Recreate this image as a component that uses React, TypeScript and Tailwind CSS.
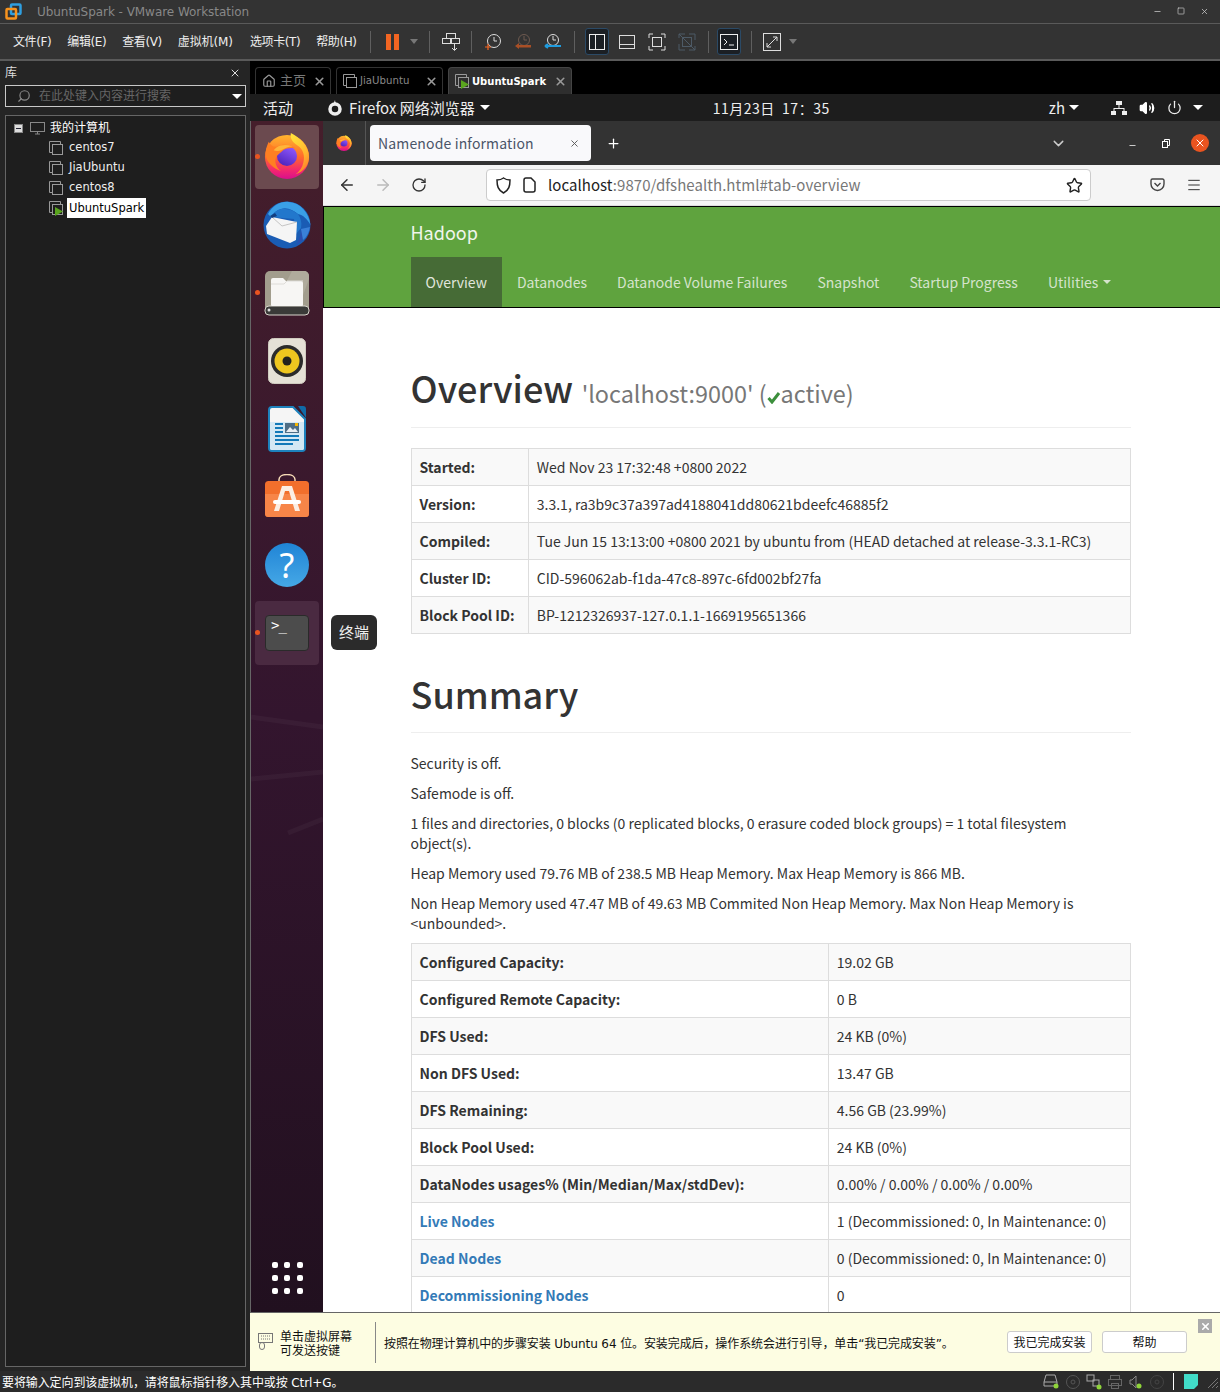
import { Minus, Square, X, Search, Plus, ChevronDown, ArrowLeft, ArrowRight, RotateCw, Star, Menu, Home, Volume2, Power } from "lucide-react"

const menus = ["文件(F)", "编辑(E)", "查看(V)", "虚拟机(M)", "选项卡(T)", "帮助(H)"]
const navItems = ["Datanodes", "Datanode Volume Failures", "Snapshot", "Startup Progress"]

const overviewRows = [
  ["Started:", "Wed Nov 23 17:32:48 +0800 2022"],
  ["Version:", "3.3.1, ra3b9c37a397ad4188041dd80621bdeefc46885f2"],
  ["Compiled:", "Tue Jun 15 13:13:00 +0800 2021 by ubuntu from (HEAD detached at release-3.3.1-RC3)"],
  ["Cluster ID:", "CID-596062ab-f1da-47c8-897c-6fd002bf27fa"],
  ["Block Pool ID:", "BP-1212326937-127.0.1.1-1669195651366"],
]

const summaryRows = [
  ["Configured Capacity:", "19.02 GB"],
  ["Configured Remote Capacity:", "0 B"],
  ["DFS Used:", "24 KB (0%)"],
  ["Non DFS Used:", "13.47 GB"],
  ["DFS Remaining:", "4.56 GB (23.99%)"],
  ["Block Pool Used:", "24 KB (0%)"],
  ["DataNodes usages% (Min/Median/Max/stdDev):", "0.00% / 0.00% / 0.00% / 0.00%"],
  ["Live Nodes", "1 (Decommissioned: 0, In Maintenance: 0)"],
  ["Dead Nodes", "0 (Decommissioned: 0, In Maintenance: 0)"],
  ["Decommissioning Nodes", "0"],
]

function VmStack({ run }: { run?: boolean }) {
  return (
    <svg width="16" height="16" viewBox="0 0 16 16" fill="none" stroke="#999" className="shrink-0">
      <path d="M4.500 12.500H1.500V1.500H12.500V4.500" />
      <rect x="4.500" y="4.500" width="10" height="10" />
      {run && <path d="M7 7l8 4.500-8 4.500z" fill="#5aa51e" stroke="none" />}
    </svg>
  )
}

function VmwareLogo() {
  return (
    <svg width="17" height="17" viewBox="0 0 17 17" fill="none" strokeWidth="2.500">
      <rect x="6" y="1.500" width="9.500" height="9.500" rx="1" stroke="#2f9fe0" />
      <rect x="1.500" y="6" width="9.500" height="9.500" rx="1" stroke="#f7931e" />
    </svg>
  )
}

function FirefoxLogo({ size }: { size: number }) {
  return (
    <svg width={size} height={size} viewBox="0 0 48 48">
      <defs>
        <linearGradient id={`ffa${size}`} x1="0.5" y1="0" x2="0.5" y2="1">
          <stop offset="0" stopColor="#ffb52e" />
          <stop offset="0.5" stopColor="#ff6a2a" />
          <stop offset="0.8" stopColor="#f3276f" />
          <stop offset="1" stopColor="#d80f8c" />
        </linearGradient>
        <linearGradient id={`ffb${size}`} x1="0.7" y1="0" x2="0.2" y2="1">
          <stop offset="0" stopColor="#9059ff" />
          <stop offset="1" stopColor="#4b21b8" />
        </linearGradient>
        <linearGradient id={`ffc${size}`} x1="0.3" y1="0" x2="0.7" y2="1">
          <stop offset="0" stopColor="#ffe03a" />
          <stop offset="0.6" stopColor="#ffb52e" />
          <stop offset="1" stopColor="#ff7a2a" />
        </linearGradient>
      </defs>
      <circle cx="24" cy="25" r="23" fill={`url(#ffa${size})`} />
      <circle cx="24" cy="24" r="10.500" fill={`url(#ffb${size})`} />
      <path d="M5 9c2 4 5 6 9 5 6-3 13-2 19 2-5-1-10 0-13 2-3 3-7 5-8 9-1 5 2 10 6 13C10 37 3 31 2 24 1 19 3 13 5 9z" fill="#ff7f22" />
      <path d="M13 15c5-3 11-3 17-1-5 0-9 2-12 4-2 1-6 1-8 0z" fill="#ffb53a" />
      <path d="M28 0c-1 6 2 10 7 13 6 4 8 11 6 18-1 5-4 9-8 12 9-3 14-10 14-18C47 14 38 5 28 0z" fill={`url(#ffc${size})`} />
    </svg>
  )
}

function ThunderbirdLogo() {
  return (
    <svg width="48" height="48" viewBox="0 0 48 48">
      <circle cx="24" cy="24" r="23.500" fill="#1a5cb4" />
      <path d="M5 13C10 4 18 0 26 1c12 1 20 11 21.500 23-3-6-7.500-10-12.500-11-5-4-11-7-17-5-4 1-8 4-10 8z" fill="#3a9fe6" />
      <path d="M8 16c3-5 8-9 14-8 6 0 10 3 13 5 3 4 4 9 3 14l-5 6-2-15z" fill="#2277cc" />
      <path d="M33 44c5-3 9-7 11-13l-6-3c0 6-2 11-5 16z" fill="#2a4fb0" />
      <path d="M38 28l9-2c-1 5-3 10-7 13z" fill="#3a80d8" />
      <path d="M3 25l6-9 25 5-1 18-6 3-23-9z" fill="#f5f5f5" />
      <path d="M9 16l10 9 15-4" fill="none" stroke="#b8b8b8" strokeWidth="0.800" />
      <path d="M7 15l5-3 2 3-5 2z" fill="#123f80" />
    </svg>
  )
}

function FilesIcon() {
  return (
    <svg width="46" height="46" viewBox="0 0 46 46">
      <rect x="1" y="1" width="44" height="44" rx="5" fill="#a29d8d" />
      <path d="M28 1h12a5 5 0 0 1 5 5v3L35 36H10z" fill="#b0ab9c" />
      <rect x="1" y="36" width="44" height="9" rx="4" fill="#3a3a38" stroke="#d8d5cc" />
      <circle cx="5" cy="40" r="1.500" fill="#ddd" />
      <path d="M7 10a2 2 0 0 1 2-2h10l3 3h15a2 2 0 0 1 2 2v22a1 1 0 0 1-1 1H8a1 1 0 0 1-1-1z" fill="#f7f6f4" />
      <path d="M7 14h13l3-3h16" stroke="#dedcd8" fill="none" />
    </svg>
  )
}

function RhythmboxIcon() {
  return (
    <svg width="38" height="46" viewBox="0 0 38 46">
      <rect x="0.500" y="0.500" width="37" height="45" rx="5" fill="#e5e1d6" stroke="#cfcbbf" />
      <circle cx="19" cy="23" r="16" fill="#2b2b2b" />
      <circle cx="19" cy="23" r="12.500" fill="#eec61f" />
      <circle cx="19" cy="23" r="4.500" fill="#22221e" />
    </svg>
  )
}

function WriterIcon() {
  return (
    <svg width="38" height="46" viewBox="0 0 38 46">
      <path d="M30 0h5a3 3 0 0 1 3 3v9z" fill="#106ba8" />
      <path d="M4 1h21l12 12v29a3 3 0 0 1-3 3H4a3 3 0 0 1-3-3V4a3 3 0 0 1 3-3z" fill="#f5f5f5" stroke="#1d82bd" strokeWidth="2" />
      <path d="M2 16h34v26a2 2 0 0 1-2 2H4a2 2 0 0 1-2-2z" fill="#d3e8f4" />
      <path d="M7 17h8v2H7zM7 21h8v2H7zM7 25h8v2H7zM7 29h24v2H7zM7 33h24v2H7zM7 37h18v2H7z" fill="#1279b8" />
      <rect x="17" y="17" width="14" height="10" fill="#4d6d85" />
      <path d="M18 26l4-5 3 3 2-2 3 4z" fill="#e8eef2" />
      <rect x="27" y="17" width="3" height="3" fill="#f4b400" />
    </svg>
  )
}

function AppStoreIcon() {
  return (
    <svg width="46" height="44" viewBox="0 0 46 44" className="-mt-[3px]">
      <path d="M15 8V5.500c0-3 3.500-5 8-5s8 2 8 5V8" fill="none" stroke="#f5d9b5" strokeWidth="1.500" />
      <rect x="1" y="7" width="44" height="36" rx="3.500" fill="#f26f2c" />
      <path d="M1 20h44v19.500a3.500 3.500 0 0 1-3.500 3.500h-37A3.500 3.500 0 0 1 1 39.500z" fill="#f78548" />
      <path d="M18 12h10l8 25h-5l-6-20h-4l-6 20h-5z" fill="#fbeee4" />
      <rect x="9" y="26" width="28" height="4" rx="2" fill="#fff" />
    </svg>
  )
}

function HelpIcon() {
  return (
    <div className="w-[44px] h-[44px] rounded-full bg-gradient-to-b from-[#1f84d6] to-[#45a8e6] flex items-center justify-center text-white text-[34px] leading-none font-['Noto_Sans',sans-serif]">
      ?
    </div>
  )
}

function TerminalIcon() {
  return (
    <div className="w-[44px] h-[36px] rounded-[4px] bg-[#4c4c4c] border border-[#2a2a2a] text-white text-[14px] leading-none pl-[5px] pt-[2px] font-['DejaVu_Sans_Mono',monospace] tracking-[-1px]">
      &gt;_
    </div>
  )
}

function DockItem({ active, running, children }: { active?: "strong" | "soft"; running?: boolean; children: React.ReactNode }) {
  return (
    <div
      className={`relative z-10 w-[64px] h-[64px] rounded-[4px] flex items-center justify-center ${
        active === "strong" ? "bg-[#6b4a4f]" : active === "soft" ? "bg-[#4a2a41]" : ""
      }`}
    >
      {running && <span className="absolute left-0 top-[29px] w-[5px] h-[5px] rounded-full bg-[#e95420]" />}
      {children}
    </div>
  )
}

function Sep() {
  return <div className="w-px h-[22px] bg-[#5f5f5f]" />
}

function Caret() {
  return <div className="w-0 h-0 border-l-[4px] border-r-[4px] border-t-[5px] border-l-transparent border-r-transparent border-t-[#777]" />
}

function WhiteCaret() {
  return <div className="w-0 h-0 border-l-[5px] border-r-[5px] border-t-[5px] border-l-transparent border-r-transparent border-t-white" />
}

function Toolbar() {
  return (
    <div className="h-[37px] shrink-0 flex items-center border-b-2 border-[#5a5a5a] bg-[#333] text-[#eee] text-[12px] pl-[13px]">
      <div className="flex gap-[16px] w-[357px]">
        {menus.map((m, i) => (
          <span key={m} className={`whitespace-nowrap ${i === 3 ? "tracking-[-0.1px] mr-[1px]" : "tracking-[-0.4px]"}`}>{m}</span>
        ))}
      </div>
      <div className="flex items-center">
        <Sep />
        <div className="ml-[15px] flex gap-[3px]">
          <span className="w-[5px] h-[16px] bg-[#f26522]" />
          <span className="w-[5px] h-[16px] bg-[#f26522]" />
        </div>
        <div className="ml-[11px] mr-[11px]"><Caret /></div>
        <Sep />
        <svg className="ml-[12px] mr-[11px]" width="18" height="20" viewBox="0 0 18 20" fill="none" stroke="#ddd">
          <rect x="4.500" y="1.500" width="9" height="5" />
          <rect x="0.500" y="6.500" width="9" height="5" />
          <rect x="8.500" y="6.500" width="9" height="5" />
          <path d="M12.500 12v6M10 16l2.500 2.500L15 16" />
        </svg>
        <Sep />
        <svg className="ml-[12px]" width="18" height="18" viewBox="0 0 18 18" fill="none">
          <circle cx="10" cy="8" r="6.500" stroke="#ddd" />
          <path d="M10 4v4h3" stroke="#ddd" />
          <path d="M1 14h6M4 11v6" stroke="#f26522" strokeWidth="1.200" />
        </svg>
        <svg className="ml-[12px]" width="18" height="18" viewBox="0 0 18 18" fill="none">
          <circle cx="10" cy="7" r="5.500" stroke="#6e5a50" />
          <path d="M10 3v4h3" stroke="#6e5a50" />
          <path d="M1 13l4-3v2h12v2.500H5V16z" fill="#a84f26" />
        </svg>
        <svg className="ml-[12px]" width="18" height="18" viewBox="0 0 18 18" fill="none">
          <circle cx="9" cy="7" r="5.500" stroke="#ddd" />
          <path d="M9 3v4h3" stroke="#ddd" />
          <path d="M1 13h16M1 13l3-2M1 13l3 2" stroke="#1f9bde" strokeWidth="2" />
        </svg>
        <div className="ml-[12px]"><Sep /></div>
        <div className="ml-[10px] w-[24px] h-[27px] rounded-[3px] bg-[#1b1f24] border border-[#2b4a66] flex items-center justify-center">
          <svg width="16" height="16" viewBox="0 0 16 16" fill="none" stroke="#eee"><rect x="0.500" y="0.500" width="15" height="15" /><path d="M6.500 1v14" /></svg>
        </div>
        <svg className="ml-[10px]" width="16" height="14" viewBox="0 0 16 14" fill="none" stroke="#ddd"><rect x="0.500" y="0.500" width="15" height="13" /><path d="M1 9.500h14" /></svg>
        <svg className="ml-[13px]" width="18" height="18" viewBox="0 0 18 18" fill="none" stroke="#ddd"><path d="M1 5V1h4M13 1h4v4M17 13v4h-4M5 17H1v-4" /><rect x="4.500" y="4.500" width="9" height="9" /></svg>
        <svg className="ml-[12px]" width="18" height="18" viewBox="0 0 18 18" fill="none" stroke="#4d5a66"><path d="M1 5V1h6M11 1h6v6M17 13v4h-6M7 17H1v-6" /><rect x="4.500" y="4.500" width="9" height="9" /><path d="M1 1l16 16" /></svg>
        <div className="ml-[12px]"><Sep /></div>
        <div className="ml-[8px] w-[24px] h-[27px] rounded-[3px] bg-[#1b1f24] border border-[#2b4a66] flex items-center justify-center">
          <svg width="18" height="16" viewBox="0 0 18 16" fill="none" stroke="#eee"><rect x="0.500" y="0.500" width="17" height="15" /><path d="M4 5l3 3-3 3M9 11h5" /></svg>
        </div>
        <div className="ml-[10px]"><Sep /></div>
        <svg className="ml-[11px]" width="18" height="18" viewBox="0 0 18 18" fill="none" stroke="#ddd"><rect x="0.500" y="0.500" width="17" height="17" /><path d="M4 14L14 4M10 4h4v4M4 10v4h4" /></svg>
        <div className="ml-[8px]"><Caret /></div>
      </div>
    </div>
  )
}

function LibraryPanel() {
  return (
    <aside className="w-[250px] shrink-0 flex flex-col px-[5px] pb-[4px] bg-[#252525] text-[12px]">
      <div className="h-[24px] shrink-0 flex items-center justify-between text-[#ddd] pr-[4px]">
        <span>库</span>
        <X size={12} strokeWidth={2} />
      </div>
      <div className="h-[22px] w-[241px] shrink-0 flex items-center border border-[#c8c8c8] bg-[#1e1e1e] pl-[11px] pr-[3px] text-[#666]">
        <Search size={14} className="text-[#888] -scale-x-100" />
        <span className="ml-[8px] flex-1">在此处键入内容进行搜索</span>
        <WhiteCaret />
      </div>
      <div className="mt-[8px] flex-1 w-[241px] border border-[#666] bg-[#1e1e1e] text-white pt-[2px] pl-[8px]">
        <div className="h-[20px] flex items-center">
          <span className="w-[9px] h-[9px] bg-[#dcdcdc] border border-[#888] flex items-center justify-center"><span className="w-[5px] h-px bg-[#223]" /></span>
          <svg className="ml-[7px]" width="15" height="13" viewBox="0 0 15 13" fill="none" stroke="#888"><rect x="0.500" y="0.500" width="14" height="9" /><path d="M5 12h5M7.500 10v2" /></svg>
          <span className="ml-[5px]">我的计算机</span>
        </div>
        {["centos7", "JiaUbuntu", "centos8"].map((n) => (
          <div key={n} className="h-[20px] flex items-center pl-[34px]">
            <VmStack />
            <span className="ml-[5px] text-[#eee] text-[11.500px]">{n}</span>
          </div>
        ))}
        <div className="h-[20px] flex items-center pl-[34px]">
          <VmStack run />
          <span className="ml-[3px] px-[2px] bg-white text-black h-[20px] leading-[20px] text-[11.500px]">UbuntuSpark</span>
        </div>
      </div>
    </aside>
  )
}

function VmTabs() {
  return (
    <div className="h-[33px] shrink-0 bg-black flex items-end pl-[5px] gap-[5px] text-[10.200px]">
      <div className="w-[76px] h-[27px] rounded-t-[4px] border border-b-0 border-[#333] flex items-center pl-[6px] pr-[4px] text-[#777] text-[13px]">
        <Home size={14} className="text-[#999]" />
        <span className="ml-[4px] flex-1">主页</span>
        <X size={13} strokeWidth={3} className="text-[#999]" />
      </div>
      <div className="w-[107px] h-[27px] rounded-t-[4px] border border-b-0 border-[#333] flex items-center pl-[5px] pr-[4px] text-[#888]">
        <VmStack />
        <span className="ml-[2px] flex-1">JiaUbuntu</span>
        <X size={13} strokeWidth={3} className="text-[#999]" />
      </div>
      <div className="w-[124px] h-[27px] rounded-t-[4px] border border-b-0 border-[#444] bg-[#2e2e2e] flex items-center pl-[5px] pr-[4px] text-white font-bold text-[10px]">
        <VmStack run />
        <span className="ml-[2px] flex-1">UbuntuSpark</span>
        <X size={13} strokeWidth={3} className="text-[#999]" />
      </div>
    </div>
  )
}

function GnomeBar() {
  return (
    <div className="h-[27px] shrink-0 bg-[#1d1d1d] text-[#eee] text-[15px] flex items-center pl-[13px] pr-[17px] font-['Noto_Sans_CJK_SC',sans-serif]">
      <span className="mt-[1px]">活动</span>
      <svg className="ml-[34px]" width="16" height="16" viewBox="0 0 16 16" fill="none" stroke="#eee">
        <circle cx="8" cy="9" r="5" strokeWidth="3.500" />
        <path d="M8 0c0 3 2 4 4 4l-6 1z" fill="#eee" stroke="none" />
      </svg>
      <span className="ml-[6px] mt-[1px]">Firefox 网络浏览器</span>
      <span className="ml-[5px]"><WhiteCaret /></span>
      <span className="ml-[223px] mt-[1px] tracking-[0.5px] text-[14px] whitespace-pre">11月23日  17：35</span>
      <span className="ml-auto mt-[1px]">zh</span>
      <span className="ml-[4px]"><WhiteCaret /></span>
      <svg className="ml-[32px]" width="16" height="14" viewBox="0 0 16 14" fill="#eee">
        <rect x="5" y="0" width="6" height="4" />
        <rect x="0" y="10" width="5" height="4" />
        <rect x="11" y="10" width="5" height="4" />
        <path d="M7.500 4h1v3h5v3h-1V8h-9v2h-1V7h5z" />
      </svg>
      <Volume2 size={16} className="ml-[12px] fill-white text-white" />
      <Power size={15} className="ml-[12px]" />
      <span className="ml-[11px]"><WhiteCaret /></span>
    </div>
  )
}

function Dock() {
  return (
    <div className="w-[73px] shrink-0 border-l border-[#666] bg-gradient-to-b from-[#451e2b] via-[#33152e] to-[#21101f] pl-[4px] pt-[4px] pb-[18px] flex flex-col gap-[4px] relative">
      <svg className="absolute left-0 top-[550px]" width="72" height="180" viewBox="0 0 72 180" fill="none" stroke="#ffffff" strokeOpacity="0.035" strokeWidth="5">
        <path d="M0 46l72 10M0 108l72-7" />
        <path d="M37 162l35-14" />
      </svg>
      <DockItem active="strong" running><div className="-mt-[3px]"><FirefoxLogo size={46} /></div></DockItem>
      <DockItem><ThunderbirdLogo /></DockItem>
      <DockItem running><FilesIcon /></DockItem>
      <DockItem><RhythmboxIcon /></DockItem>
      <DockItem><WriterIcon /></DockItem>
      <DockItem><AppStoreIcon /></DockItem>
      <DockItem><HelpIcon /></DockItem>
      <DockItem active="soft" running><TerminalIcon /></DockItem>
      <div className="mt-auto ml-[17px] w-[30px] grid grid-cols-3 gap-[7px]">
        {[0, 1, 2, 3, 4, 5, 6, 7, 8].map((i) => (
          <span key={i} className="w-[6px] h-[6px] rounded-[2px] bg-white" />
        ))}
      </div>
      <div className="absolute left-[80px] top-[494px] w-[46px] h-[35px] rounded-[6px] bg-[#2b2b2b] text-[#eee] text-[15px] flex items-center justify-center font-['Noto_Sans_CJK_SC',sans-serif] z-10">
        终端
      </div>
    </div>
  )
}

function BrowserChrome() {
  return (
    <>
      <div className="h-[44px] shrink-0 bg-[#333] flex items-center text-white">
        <div className="w-[43px] h-full border-r border-[#555] flex items-center justify-center">
          <FirefoxLogo size={16} />
        </div>
        <div className="ml-[4px] w-[221px] h-[36px] rounded-[4px] bg-[#f9f9fb] flex items-center pl-[8px] pr-[11px] text-[#4a5568] text-[14px]">
          <span className="flex-1 tracking-[0.15px]">Namenode information</span>
          <X size={11} className="text-[#555]" />
        </div>
        <Plus size={15} className="ml-[15px]" />
        <ChevronDown size={17} className="ml-[429px] text-[#ccc]" />
        <Minus size={9} className="ml-[61px] mt-[4px]" />
        <svg className="ml-[25px]" width="8" height="9" viewBox="0 0 8 9" fill="none" stroke="#fff"><rect x="0.500" y="2.500" width="5" height="6" /><path d="M2.500 2V.5h5v6H6" /></svg>
        <div className="ml-[21px] w-[18px] h-[18px] rounded-full bg-[#e95420] flex items-center justify-center">
          <X size={12} strokeWidth={2} />
        </div>
      </div>
      <div className="h-[41px] shrink-0 bg-[#f5f5f5] flex items-center pl-[15px] text-[#333] border-b border-[#ddd]">
        <ArrowLeft size={18} />
        <ArrowRight size={18} className="ml-[18px] text-[#bbb]" />
        <RotateCw size={16} className="ml-[19px]" />
        <div className="ml-[59px] w-[605px] h-[32px] rounded-[4px] bg-white border border-[#ccc] flex items-center pl-[9px] pr-[7px] text-[15px]">
          <svg width="15" height="17" viewBox="0 0 15 17" fill="none" stroke="#222" strokeWidth="1.500"><path d="M7.500 1C5.500 2.500 3 3 1 3c0 6 1 10 6.500 13C13 13 14 9 14 3c-2 0-4.500-.5-6.500-2z" /></svg>
          <svg className="ml-[12px]" width="13" height="16" viewBox="0 0 13 16" fill="none" stroke="#222" strokeWidth="1.500"><path d="M1 3a2 2 0 0 1 2-2h5l4 4v8a2 2 0 0 1-2 2H3a2 2 0 0 1-2-2z" /></svg>
          <span className="ml-[12px] flex-1 text-[#222] tracking-[0.05px]">localhost<span className="text-[#777]">:9870/dfshealth.html#tab-overview</span></span>
          <Star size={17} className="text-[#222]" />
        </div>
        <svg className="ml-[59px]" width="15" height="14" viewBox="0 0 15 14" fill="none" stroke="#444" strokeWidth="1.400"><path d="M1 2.500A1.500 1.500 0 0 1 2.500 1h10A1.500 1.500 0 0 1 14 2.500V6a6.500 6.500 0 0 1-13 0z" /><path d="M4.500 5l3 3 3-3" /></svg>
        <Menu size={16} strokeWidth={1.500} className="ml-[21px] text-[#333]" />
      </div>
    </>
  )
}

function InfoTable({ rows, firstCol, links }: { rows: string[][]; firstCol: string; links?: boolean }) {
  return (
    <table className="w-[720px] border border-[#ddd] border-collapse text-[14px] leading-[20px] text-[#333]">
      <tbody>
        {rows.map(([k, v], i) => (
          <tr key={k} className={i % 2 === 0 ? "bg-[#f9f9f9]" : "bg-white"}>
            <th className={`${firstCol} border border-[#ddd] py-[8px] pl-[7.500px] pr-[8px] text-left font-bold`}>
              {links && i >= 7 ? <span className="text-[#337ab7]">{k}</span> : k}
            </th>
            <td className="border border-[#ddd] py-[8px] pl-[7.800px] pr-[8px]">{v}</td>
          </tr>
        ))}
      </tbody>
    </table>
  )
}

function HadoopPage() {
  return (
    <div className="flex-1 overflow-hidden bg-white text-[#333] text-[14px] leading-[20px]">
      <div className="h-[102px] bg-[#5fa33e] border border-black border-r-0">
        <div className="pl-[86.500px] pt-[15px] text-[18px] leading-[20px] text-[#f0f5ec]">Hadoop</div>
        <div className="pl-[87px] mt-[15px] flex text-[#d5e3cc]">
          <span className="pl-[14.500px] pr-[15.500px] py-[15px] bg-[#466b36] text-[#e0e6dc]">Overview</span>
          {navItems.map((n) => (
            <span key={n} className="pl-[14.500px] pr-[15.500px] py-[15px]">{n}</span>
          ))}
          <span className="pl-[14.500px] pr-[15.500px] py-[15px] flex items-center gap-[5px]">
            Utilities
            <span className="w-0 h-0 border-l-[4px] border-r-[4px] border-t-[4px] border-l-transparent border-r-transparent border-t-[#d5e3cc]" />
          </span>
        </div>
      </div>
      <div className="pl-[88px] w-[808px]">
        <div className="mt-[60px] border-b border-[#eee] flex items-baseline h-[60px]">
          <h1 className="-ml-[0.500px] text-[36px] leading-[39px] font-medium">Overview</h1>
          <span className="ml-[8.500px] text-[23.400px] leading-[24px] text-[#777] whitespace-nowrap flex items-baseline">
            'localhost:9000' (
            <svg className="self-end mb-[1px]" width="14" height="13" viewBox="0 0 14 13" fill="none" stroke="#3c8f3c" strokeWidth="3"><path d="M1.500 7l3.500 4 7-9" /></svg>
            active)
          </span>
        </div>
        <div className="mt-[20px]">
          <InfoTable rows={overviewRows} firstCol="w-[117px]" />
        </div>
        <div className="mt-[40px] pb-[19px] border-b border-[#eee]">
          <h1 className="-ml-[0.500px] text-[36px] leading-[39px] font-medium">Summary</h1>
        </div>
        <div className="mt-[20px] -ml-[0.500px] w-[720px] flex flex-col gap-[10px]">
          <p>Security is off.</p>
          <p>Safemode is off.</p>
          <p>1 files and directories, 0 blocks (0 replicated blocks, 0 erasure coded block groups) = 1 total filesystem object(s).</p>
          <p>Heap Memory used 79.76 MB of 238.5 MB Heap Memory. Max Heap Memory is 866 MB.</p>
          <p>Non Heap Memory used 47.47 MB of 49.63 MB Commited Non Heap Memory. Max Non Heap Memory is &lt;unbounded&gt;.</p>
        </div>
        <div className="mt-[10px]">
          <InfoTable rows={summaryRows} firstCol="w-[417px]" links />
        </div>
      </div>
    </div>
  )
}

function InfoBar() {
  return (
    <div className="h-[59px] shrink-0 bg-[#fdfde2] border-t border-[#666] relative flex items-center pl-[8px] text-[12px] text-[#111]">
      <svg width="15" height="18" viewBox="0 0 15 18" fill="none" stroke="#777"><rect x="0.500" y="0.500" width="14" height="9" /><path d="M3 3h9M3 6h9" strokeDasharray="1 1" /><rect x="1.500" y="9.500" width="5" height="7" rx="2.500" /></svg>
      <div className="ml-[7px] mt-[3px] w-[95px] leading-[14px]">单击虚拟屏幕<br />可发送按键</div>
      <div className="w-px h-[41px] bg-[#888]" />
      <div className="ml-[8px] mt-[3px] w-[623px] whitespace-nowrap tracking-[-0.1px]">按照在物理计算机中的步骤安装 Ubuntu 64 位。安装完成后，操作系统会进行引导，单击“我已完成安装”。</div>
      <div className="w-[85px] h-[22px] rounded-[3px] bg-white border border-[#ccc] flex items-center justify-center pt-[1px]">我已完成安装</div>
      <div className="ml-[10px] w-[85px] h-[22px] rounded-[3px] bg-white border border-[#ccc] flex items-center justify-center pt-[1px]">帮助</div>
      <div className="absolute right-[8px] top-[6px] w-[14px] h-[14px] bg-[#aaa] flex items-center justify-center">
        <X size={11} strokeWidth={3.500} className="text-white" />
      </div>
    </div>
  )
}

function StatusBar() {
  return (
    <div className="h-[21px] shrink-0 bg-[#2b2b2b] flex items-center pl-[2px] text-[12px] text-white">
      <span className="flex-1 mt-[3px] tracking-[-0.1px]">要将输入定向到该虚拟机，请将鼠标指针移入其中或按 Ctrl+G。</span>
      <div className="flex items-center gap-[5px] pr-[1px]">
        <svg width="18" height="17" viewBox="0 0 18 17" fill="none" stroke="#aaa"><path d="M2 9l2-7h9l2 7v4H2zM2 9h13" /><circle cx="14" cy="13" r="2.500" fill="#8fd43a" stroke="none" /></svg>
        <svg width="16" height="16" viewBox="0 0 16 16" fill="none" stroke="#555"><circle cx="8" cy="8" r="6.500" /><circle cx="8" cy="8" r="2" /></svg>
        <svg width="16" height="16" viewBox="0 0 16 16" fill="none" stroke="#aaa"><rect x="1" y="1" width="7" height="6" /><rect x="7" y="6" width="6" height="6" /><circle cx="13" cy="13" r="2.500" fill="#8fd43a" stroke="none" /></svg>
        <svg width="16" height="16" viewBox="0 0 16 16" fill="none" stroke="#666"><rect x="3.500" y="1.500" width="9" height="4" /><rect x="1.500" y="5.500" width="13" height="6" /><rect x="4.500" y="9.500" width="7" height="5" /></svg>
        <svg width="16" height="16" viewBox="0 0 16 16" fill="none" stroke="#888"><path d="M2 6h2l4-4v12l-4-4H2z" /><circle cx="11" cy="12" r="2.500" fill="#8fd43a" stroke="none" /></svg>
        <svg width="16" height="16" viewBox="0 0 16 16" fill="none" stroke="#444"><circle cx="8" cy="8" r="6.500" /><circle cx="8" cy="8" r="2" /></svg>
        <div className="ml-[3px] w-px h-[17px] bg-white" />
        <svg className="ml-[5px]" width="14" height="15" viewBox="0 0 14 15"><path d="M0 0h14v11l-4 4H0z" fill="#41dcc8" /></svg>
        <svg className="ml-[2px]" width="14" height="14" viewBox="0 0 14 14" stroke="#777"><path d="M13 3L3 13M13 7l-6 6M13 11l-2 2" /></svg>
      </div>
    </div>
  )
}

export default function App() {
  return (
    <div className="w-[1220px] h-[1392px] overflow-hidden flex flex-col bg-[#252525] font-['DejaVu_Sans','Noto_Sans_CJK_SC',sans-serif]">
      <div className="h-[24px] shrink-0 bg-[#333] border-b border-[#5a5a5a] flex items-center pl-[5px] pr-[11px] text-[12px] text-[#888]">
        <VmwareLogo />
        <span className="ml-[15px] mt-[1px] flex-1 tracking-[-0.05px]">UbuntuSpark - VMware Workstation</span>
        <div className="flex gap-[15px] text-[#ccc]">
          <Minus size={9} />
          <Square size={8} />
          <X size={9} />
        </div>
      </div>
      <Toolbar />
      <div className="flex-1 flex min-h-0">
        <LibraryPanel />
        <div className="flex-1 flex flex-col min-w-0">
          <VmTabs />
          <GnomeBar />
          <div className="flex-1 flex min-h-0">
            <Dock />
            <div className="flex-1 flex flex-col min-w-0 font-['Noto_Sans_CJK_SC','Noto_Sans',sans-serif]">
              <BrowserChrome />
              <HadoopPage />
            </div>
          </div>
          <InfoBar />
        </div>
      </div>
      <StatusBar />
    </div>
  )
}
